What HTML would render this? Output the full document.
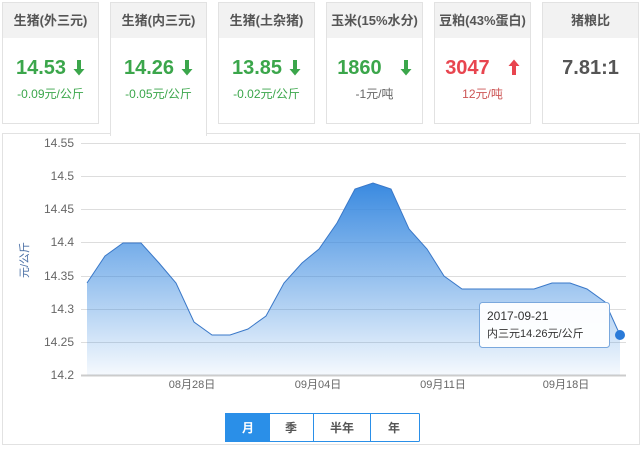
<!DOCTYPE html>
<html><head><meta charset="utf-8"><style>
body{margin:0;width:642px;height:452px;background:#fff;font-family:"Liberation Sans","Noto Sans CJK SC",sans-serif;position:relative;overflow:hidden}
.card{position:absolute;top:2px;width:97px;height:122px;border:1px solid #e2e2e2;box-sizing:border-box;background:#fff}
.card .h{height:35px;background:#f2f2f2;text-align:center;line-height:35px;font-size:13px;font-weight:bold;color:#555}
.card .v{text-align:center;font-size:20px;font-weight:bold;margin-top:17px;height:26px;line-height:26px}
.card .d{text-align:center;font-size:12px;margin-top:4px}
.g{color:#3ba64b}.r{color:#e8454f}
.act{height:134px;border-bottom:none;z-index:2}
.panel{position:absolute;left:2px;top:133px;width:638px;height:312px;border:1px solid #e2e2e2;box-sizing:border-box}
.ar{display:inline-block;vertical-align:-2px;margin-left:7px}
</style></head><body>
<div class="card" style="left:2px"><div class="h">生猪(外三元)</div><div class="v g">14.53<svg class="ar" width="12" height="17" viewBox="0 0 12 17"><path d="M4,1H8V10H11.5L6,16.5L0.5,10H4Z" fill="#3ba64b"/></svg></div><div class="d g">-0.09元/公斤</div></div>
<div class="card act" style="left:110px"><div class="h">生猪(内三元)</div><div class="v g">14.26<svg class="ar" width="12" height="17" viewBox="0 0 12 17"><path d="M4,1H8V10H11.5L6,16.5L0.5,10H4Z" fill="#3ba64b"/></svg></div><div class="d g">-0.05元/公斤</div></div>
<div class="card" style="left:218px"><div class="h">生猪(土杂猪)</div><div class="v g">13.85<svg class="ar" width="12" height="17" viewBox="0 0 12 17"><path d="M4,1H8V10H11.5L6,16.5L0.5,10H4Z" fill="#3ba64b"/></svg></div><div class="d g">-0.02元/公斤</div></div>
<div class="card" style="left:326px"><div class="h">玉米(15%水分)</div><div class="v g">1860 &nbsp;<svg class="ar" width="12" height="17" viewBox="0 0 12 17"><path d="M4,1H8V10H11.5L6,16.5L0.5,10H4Z" fill="#3ba64b"/></svg></div><div class="d" style="color:#666">-1元/吨</div></div>
<div class="card" style="left:434px"><div class="h">豆粕(43%蛋白)</div><div class="v r">3047 &nbsp;<svg class="ar" width="12" height="17" viewBox="0 0 12 17"><path d="M4,16H8V7H11.5L6,0.5L0.5,7H4Z" fill="#e8454f"/></svg></div><div class="d" style="color:#c55">12元/吨</div></div>
<div class="card" style="left:542px"><div class="h">猪粮比</div><div class="v" style="color:#555">7.81:1</div></div>
<div class="panel"></div>
<svg style="position:absolute;left:0;top:0;z-index:3" width="642" height="452">
<defs><linearGradient id="gr" x1="0" y1="0" x2="0" y2="1"><stop offset="0" stop-color="#3a8ae0"/><stop offset="1" stop-color="#3a8ae0" stop-opacity="0.05"/></linearGradient></defs>
<g stroke="#ddd" stroke-width="1">
<line x1="81" y1="143.5" x2="626" y2="143.5"/><line x1="81" y1="176.5" x2="626" y2="176.5"/><line x1="81" y1="209.5" x2="626" y2="209.5"/><line x1="81" y1="242.5" x2="626" y2="242.5"/><line x1="81" y1="276.5" x2="626" y2="276.5"/><line x1="81" y1="309.5" x2="626" y2="309.5"/><line x1="81" y1="342.5" x2="626" y2="342.5"/></g>
<line x1="81" y1="375.5" x2="626" y2="375.5" stroke="#ccc" stroke-width="2"/>
<g font-size="12" fill="#666" text-anchor="end">
<text x="74" y="147">14.55</text><text x="74" y="180">14.5</text><text x="74" y="213">14.45</text><text x="74" y="246">14.4</text><text x="74" y="280">14.35</text><text x="74" y="313">14.3</text><text x="74" y="346">14.25</text><text x="74" y="379">14.2</text></g>
<g font-size="11" fill="#666" text-anchor="middle"><text x="192" y="388">08月28日</text><text x="318" y="388">09月04日</text><text x="443" y="388">09月11日</text><text x="566" y="388">09月18日</text></g>
<text transform="translate(28,260) rotate(-90)" font-size="11" fill="#4a6fa5" text-anchor="middle">元/公斤</text>
<path d="M87,283 L105,256 L123,243 L141,243 L159,263 L176,283 L194,322 L212,335 L230,335 L248,329 L266,316 L284,283 L302,263 L319,249 L337,223 L355,189 L373,183 L391,189 L409,229 L427,249 L444,276 L462,289 L534,289 L552,283 L570,283 L587,289 L605,302 L620,335 L620,375 L87,375 Z" fill="url(#gr)"/>
<path d="M87,283 L105,256 L123,243 L141,243 L159,263 L176,283 L194,322 L212,335 L230,335 L248,329 L266,316 L284,283 L302,263 L319,249 L337,223 L355,189 L373,183 L391,189 L409,229 L427,249 L444,276 L462,289 L534,289 L552,283 L570,283 L587,289 L605,302 L620,335" fill="none" stroke="#3a78c8" stroke-width="1"/>
<circle cx="620" cy="335" r="5" fill="#2a7ad8"/>
<rect x="479.5" y="302.5" width="130" height="45" rx="3" fill="#fff" fill-opacity="0.95" stroke="#7aa8dd"/>
<text x="487" y="320" font-size="12" fill="#333">2017-09-21</text>
<text x="487" y="337" font-size="11" fill="#333">内三元14.26元/公斤</text>
<g font-size="12" font-weight="bold" text-anchor="middle">
<rect x="225" y="413" width="45" height="29" fill="#2a8fe8"/>
<rect x="225.5" y="413.5" width="194" height="28" fill="none" stroke="#2a8fe8" rx="1"/>
<line x1="313.5" y1="413" x2="313.5" y2="442" stroke="#2a8fe8"/><line x1="370.5" y1="413" x2="370.5" y2="442" stroke="#2a8fe8"/>
<text x="248" y="432" fill="#fff">月</text><text x="291" y="432" fill="#555">季</text><text x="342" y="432" fill="#555">半年</text><text x="394" y="432" fill="#555">年</text></g>
</svg>
</body></html>
